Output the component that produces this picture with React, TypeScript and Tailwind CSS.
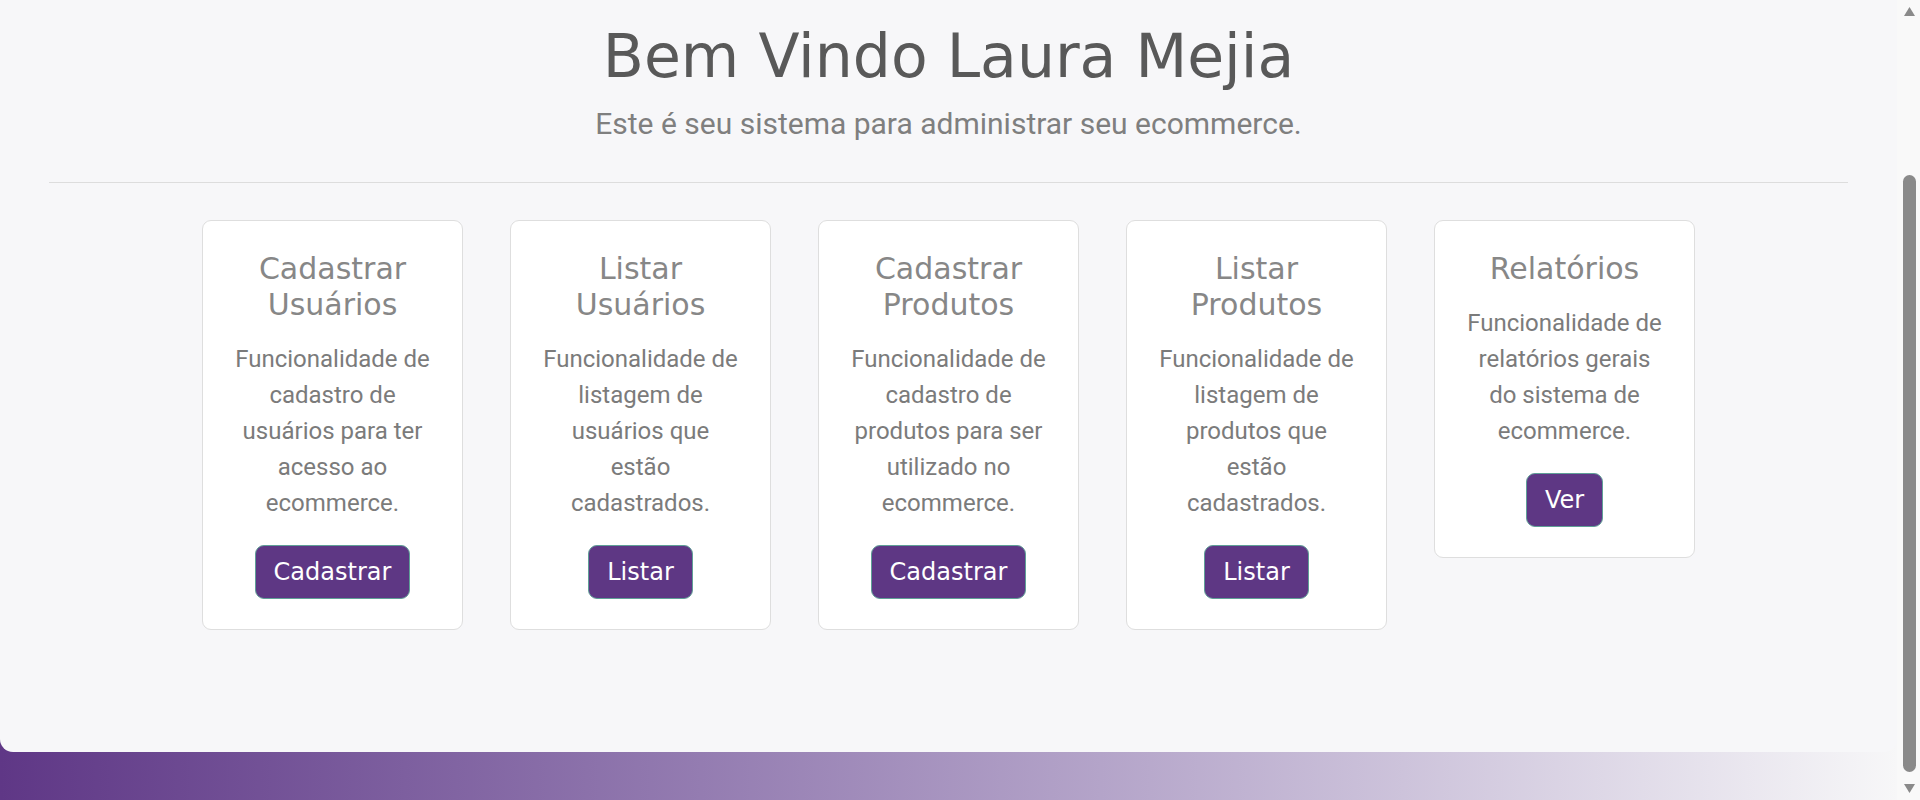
import React from "react";

const cards = [
  {
    title: ["Cadastrar", "Usuários"],
    text: ["Funcionalidade de", "cadastro de", "usuários para ter", "acesso ao", "ecommerce."],
    btn: "Cadastrar",
  },
  {
    title: ["Listar", "Usuários"],
    text: ["Funcionalidade de", "listagem de", "usuários que", "estão", "cadastrados."],
    btn: "Listar",
  },
  {
    title: ["Cadastrar", "Produtos"],
    text: ["Funcionalidade de", "cadastro de", "produtos para ser", "utilizado no", "ecommerce."],
    btn: "Cadastrar",
  },
  {
    title: ["Listar", "Produtos"],
    text: ["Funcionalidade de", "listagem de", "produtos que", "estão", "cadastrados."],
    btn: "Listar",
  },
  {
    title: ["Relatórios"],
    text: ["Funcionalidade de", "relatórios gerais", "do sistema de", "ecommerce."],
    btn: "Ver",
  },
];

const heading = { fontFamily: '"DejaVu Sans", "Liberation Sans", sans-serif' };
const body = { fontFamily: 'Roboto, "Liberation Sans", sans-serif' };

export default function App() {
  return (
    <div className="flex h-[800px] w-full overflow-hidden">
      <div className="flex flex-1 flex-col bg-linear-to-r from-[#5f3786] to-[#f7f7f8]">
        <div className="flex h-[752px] flex-col rounded-b-[13px] bg-[#f7f7f9] px-[49px]">
          <h1
            className="pt-[20px] text-center text-[60px] font-normal leading-[72px] text-[#595959]"
            style={heading}
          >
            Bem Vindo Laura Mejia
          </h1>
          <p
            className="mt-[9px] text-center text-[30px] leading-[45px] text-[#7f7f7f]"
            style={body}
          >
            Este é seu sistema para administrar seu ecommerce.
          </p>
          <hr className="mt-[36px] border-0 border-t border-[#dddddd]" />
          <div className="mt-[37px] flex items-start justify-center gap-[47px]">
            {cards.map((c, i) => (
              <div
                key={i}
                className="w-[261px] rounded-[9px] border border-[#dedede] bg-white p-[30px] text-center"
              >
                <h3
                  className="mb-[18px] text-[30px] font-normal leading-[36px] text-[#878787]"
                  style={heading}
                >
                  {c.title.map((t, j) => (
                    <span key={j} className="block">
                      {t}
                    </span>
                  ))}
                </h3>
                <p className="mb-[24px] text-[24px] leading-[36px] text-[#7b7b7b]" style={body}>
                  {c.text.map((t, j) => (
                    <span key={j} className="block">
                      {t}
                    </span>
                  ))}
                </p>
                <button
                  className="inline-block rounded-[9px] border border-[#5f9f97] bg-[#5e3784] px-[18px] py-[8px] text-[24px] leading-[36px] text-white"
                  style={heading}
                >
                  {c.btn}
                </button>
              </div>
            ))}
          </div>
        </div>
      </div>
      <div className="flex w-[23px] flex-col items-center bg-[#f9f9f9] pl-[6px] pr-[4px]">
        <svg width="13" height="11" viewBox="0 0 13 11" className="mt-[6px]">
          <path d="M6.5 1 L12 10 L1 10 Z" fill="#8a8a8a" />
        </svg>
        <div className="mt-[158px] h-[597px] w-[13px] rounded-full bg-[#8a8a8a]" />
        <svg width="13" height="11" viewBox="0 0 13 11" className="mt-[11px]">
          <path d="M1 1 L12 1 L6.5 10 Z" fill="#8a8a8a" />
        </svg>
      </div>
    </div>
  );
}
